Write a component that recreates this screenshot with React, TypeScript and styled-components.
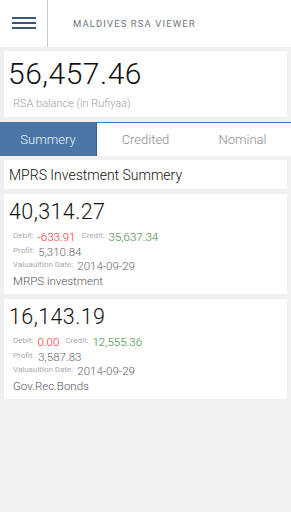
import React from 'react';
import styled, { createGlobalStyle } from 'styled-components';

const GlobalStyle = createGlobalStyle`
  html, body {
    margin: 0;
    padding: 0;
    background: #f0f0f0;
    font-family: Roboto, "Noto Sans", sans-serif;
  }
`;

const Page = styled.div`
  width: 291px;
  min-height: 512px;
  background: #f0f0f0;
`;

const Header = styled.header`
  display: flex;
  align-items: center;
  height: 47px;
  background: #fff;
`;

const MenuButton = styled.div`
  width: 48px;
  height: 47px;
  display: flex;
  align-items: center;
  justify-content: center;
  border-right: 1px solid #c3cdd8;
  box-sizing: border-box;
`;

const Title = styled.h1`
  margin: 0 0 0 25px;
  font-size: 9.5px;
  font-weight: 400;
  letter-spacing: 1.1px;
  color: #6d7680;
`;

const Card = styled.div<{ $mt?: number }>`
  background: #fff;
  margin: ${p => p.$mt ?? 4}px 4px 0;
  padding: 5px 6px;
`;

const Balance = styled.div`
  font-size: 30px;
  font-weight: 300;
  letter-spacing: 0.5px;
  color: #111;
  line-height: 36px;
  margin-left: -2px;
`;

const BalanceLabel = styled.div`
  font-size: 11px;
  font-weight: 300;
  color: #9e9ca6;
  margin: 5px 0 1px 3px;
  line-height: 14px;
`;

const Tabs = styled.div`
  display: grid;
  grid-template-columns: repeat(3, 1fr);
  margin-top: 5px;
  background: #fff;
  border-top: 1px solid #4a76a6;
  height: 33px;
`;

const Tab = styled.div<{ $active?: boolean }>`
  display: flex;
  align-items: center;
  justify-content: center;
  font-size: 13px;
  font-weight: 300;
  background: ${p => (p.$active ? '#4a76a6' : '#fff')};
  color: ${p => (p.$active ? '#eef2f7' : '#8f8c94')};
  border-right: ${p => (p.$active ? '1px solid #2f5f93' : 'none')};
`;

const SectionTitle = styled.div`
  background: #fff;
  margin: 4px 4px 0;
  padding: 0 5px;
  height: 29px;
  display: flex;
  align-items: center;
  font-size: 14px;
  font-weight: 300;
  color: #111;
`;

const Amount = styled.div`
  font-size: 21.5px;
  font-weight: 300;
  letter-spacing: 0.4px;
  color: #111;
  line-height: 26px;
  margin-left: -1px;
`;

const Row = styled.div<{ $mt?: number }>`
  display: flex;
  align-items: baseline;
  height: 14.5px;
  line-height: 14.5px;
  margin: ${p => p.$mt ?? 0}px 0 0 3px;
`;

const Label = styled.span`
  font-size: 8px;
  color: #aaa8b0;
  margin-right: 4px;
  position: relative;
  top: -3px;
`;

const Value = styled.span<{ $color?: string }>`
  font-size: 11.5px;
  font-weight: 300;
  color: ${p => p.$color || '#5f646e'};
  margin-right: 6px;
`;

const Name = styled.div`
  font-size: 11.5px;
  font-weight: 300;
  color: #50535b;
  line-height: 15.5px;
  margin-left: 3px;
`;

const Hamburger = () => (
  <svg width="24" height="13" viewBox="0 0 24 13">
    <rect x="0" y="0" width="24" height="2" fill="#3e5771" />
    <rect x="0" y="5" width="24" height="2" fill="#3e5771" />
    <rect x="0" y="10" width="24" height="2" fill="#3e5771" />
  </svg>
);

interface Investment {
  amount: string;
  debit: string;
  credit: string;
  profit: string;
  date: string;
  name: string;
}

const investments: Investment[] = [
  { amount: '40,314.27', debit: '-633.91', credit: '35,637.34', profit: '5,310.84', date: '2014-09-29', name: 'MRPS investment' },
  { amount: '16,143.19', debit: '0.00', credit: '12,555.36', profit: '3,587.83', date: '2014-09-29', name: 'Gov.Rec.Bonds' },
];

const InvestmentCard: React.FC<{ item: Investment }> = ({ item }) => (
  <Card $mt={5}>
    <Amount>{item.amount}</Amount>
    <Row $mt={5}>
      <Label>Debit:</Label>
      <Value $color="#f42c2c">{item.debit}</Value>
      <Label>Credit:</Label>
      <Value $color="#3b873b">{item.credit}</Value>
    </Row>
    <Row>
      <Label>Profit:</Label>
      <Value>{item.profit}</Value>
    </Row>
    <Row>
      <Label>Valuaultion Date:</Label>
      <Value>{item.date}</Value>
    </Row>
    <Name>{item.name}</Name>
  </Card>
);

export default function App() {
  return (
    <Page>
      <GlobalStyle />
      <Header>
        <MenuButton>
          <Hamburger />
        </MenuButton>
        <Title>MALDIVES RSA VIEWER</Title>
      </Header>
      <Card>
        <Balance>56,457.46</Balance>
        <BalanceLabel>RSA balance (in Rufiyaa)</BalanceLabel>
      </Card>
      <Tabs>
        <Tab $active>Summery</Tab>
        <Tab>Credited</Tab>
        <Tab>Nominal</Tab>
      </Tabs>
      <SectionTitle>MPRS Investment Summery</SectionTitle>
      {investments.map((it, i) => (
        <InvestmentCard key={i} item={it} />
      ))}
    </Page>
  );
}
